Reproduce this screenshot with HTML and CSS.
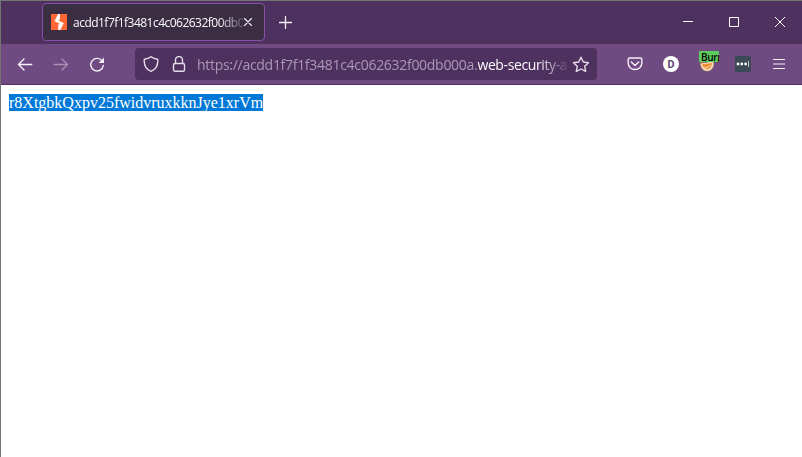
FILE: index.html
```html
<!DOCTYPE html>
<html lang="en">
<head>
<meta charset="utf-8">
<title>Browser window</title>
<link rel="stylesheet" href="styles.css">
</head>
<body>
<div class="window">
  <header class="tabbar">
    <div class="tab">
      <svg class="favicon" width="16" height="16" viewBox="0 0 16 16"><path fill="#ff6633" d="M0 0h16v16H0z"/><path fill="#fff" d="M7 0h2v5.200L7.500 6.700 12.800 9 9.300 16H7.200v-5l1.300-1.500L3.500 7.300z"/></svg>
      <span class="tab-title">acdd1f7f1f3481c4c062632f00db000a</span>
      <svg class="tab-close" width="10" height="10" viewBox="0 0 10 10"><path d="M1.500 1.500l7 7m0-7l-7 7"/></svg>
    </div>
    <svg class="newtab" width="13" height="13" viewBox="0 0 13 13"><path d="M6.500 .5v12M.5 6.500h12"/></svg>
    <div class="controls">
      <svg width="46" height="43" viewBox="0 0 46 43"><path d="M18 20.500h10"/></svg>
      <svg width="46" height="43" viewBox="0 0 46 43"><path d="M18.500 16.500h9v9h-9z"/></svg>
      <svg width="46" height="43" viewBox="0 0 46 43"><path d="M18 16l10 10m0-10L18 26"/></svg>
    </div>
  </header>
  <nav class="toolbar">
    <div class="history">
      <svg width="16" height="16" viewBox="0 0 16 16"><path d="M14.700 8.500H1.700M7 3L1.500 8.500 7 14"/></svg>
      <svg class="off" width="16" height="16" viewBox="0 0 16 16"><path d="M1.300 8.500h13M9 3l5.500 5.500L9 14"/></svg>
      <svg width="16" height="16" viewBox="0 0 16 16"><path d="M13.500 5.500A6.300 6.300 0 1 0 14.300 9.500"/><path class="solid" d="M15 1.500V7H9.500z"/></svg>
    </div>
    <div class="address">
      <svg width="16" height="16" viewBox="0 0 16 16"><path d="M8 .8C6 2.300 3.600 3 1.300 3.200C.8 8.500 3 13.500 8 15.300C13 13.500 15.200 8.500 14.700 3.200C12.400 3 10 2.300 8 .8z"/></svg>
      <svg class="lock" width="14" height="16" viewBox="0 0 14 16"><rect x="1.500" y="7.500" width="11" height="7.800" rx="1.500"/><path d="M3.500 7.500V4a3.500 3.500 0 0 1 7 0v3.500"/></svg>
      <span class="url"><span class="dim">https://acdd1f7f1f3481c4c062632f00db000a.</span><span class="host">web-security-academy.net</span></span>
      <svg class="star" width="18" height="17" viewBox="0 0 18 17"><path d="M9 1.200l2.300 4.800 5.200.7-3.800 3.600 1 5.200L9 13l-4.700 2.500 1-5.200L1.500 6.700l5.200-.7z"/></svg>
    </div>
    <div class="tools">
      <svg width="16" height="16" viewBox="0 0 16 16"><path d="M2.700 2h10.600a1.500 1.500 0 0 1 1.500 1.500v3.700a6.800 6.300 0 0 1-13.600 0V3.500A1.500 1.500 0 0 1 2.700 2zM4.300 6L8 9.500 11.700 6"/></svg>
      <span class="dbadge">D</span>
      <span class="proxy">
        <svg width="16" height="16" viewBox="0 0 16 16"><path class="fox" d="M1 4C0 10 2 15.500 8 15.500S16 10 15 4z"/><path class="tail" d="M1.500 8c2-2 6 0 8-2 3-2 6 0 5 3-1 4-3 6-7 6-3 0-5-3-6-7z"/><path class="orange" d="M3 7.500c3 2 7-1 10 0-1 5-4 6-6 5.500-2-.5-3-2.500-4-5.500z"/><path class="streak" d="M5 12c3 0 5-1 6.500-3"/></svg>
        <span class="proxy-label">Burp</span>
      </span>
      <svg class="pass" width="16" height="16" viewBox="0 0 16 16"><rect width="16" height="16" rx="1.500"/><circle cx="3" cy="8" r="1.400"/><circle cx="6.800" cy="8" r="1.400"/><circle cx="10.600" cy="8" r="1.400"/><path d="M13.500 5.500v5"/></svg>
      <svg class="menu" width="12" height="16" viewBox="0 0 12 16"><path d="M0 3.500h12M0 8h12M0 12.500h12"/></svg>
    </div>
  </nav>
  <main class="page"><span class="selected">r8XtgbkQxpv25fwidvruxkknJye1xrVm</span></main>
</div>
</body>
</html>
```

FILE: styles.css
```css
* { box-sizing: border-box; }
body { margin: 0; background: #fff; overflow: hidden; }
svg { display: block; flex: none; fill: none; stroke: #f5eff8; stroke-width: 1.4; stroke-linecap: round; stroke-linejoin: round; }
.window { width: 802px; height: 457px; border-top: 1px solid #747474; border-left: 1px solid #747474; display: flex; flex-direction: column; }
.tabbar { height: 43px; flex: none; background: #4f315f; display: flex; align-items: flex-start; padding-left: 41px; }
.tab { width: 223px; height: 38px; margin-top: 2px; border: 1px solid #864fa8; border-radius: 4px; background: #3b2e42; display: flex; align-items: center; padding: 0 11px 0 8px; }
.favicon { stroke: none; }
.tab-title { width: 170px; margin-left: 6px; padding-top: 2px; overflow: hidden; white-space: nowrap; color: #fbfafc; font: 12px/20px "Open Sans", sans-serif; letter-spacing: -0.52px; mask-image: linear-gradient(to right, #000 145px, transparent 175px); }
.tab-close { stroke-width: 1.1; }
.newtab { margin: 15px 0 0 14px; stroke-width: 1.3; }
.controls { display: flex; margin-left: auto; margin-right: -1px; }
.controls svg { stroke: #fff; stroke-width: 1; stroke-linecap: butt; stroke-linejoin: miter; }
.toolbar { height: 41px; flex: none; background: #704b82; border-bottom: 1px solid #51335f; display: flex; align-items: center; padding-left: 16px; }
.history { display: flex; gap: 20px; width: 118px; }
.off { opacity: .42; }
.solid { fill: #f5eff8; stroke: none; }
.address { width: 462px; height: 32px; border-radius: 4px; background: #4f315f; display: flex; align-items: center; padding: 0 7px 0 8px; }
.address svg { stroke: #e6dcea; }
.lock { margin-left: 13px; }
.url { width: 370px; margin-left: 11px; padding-top: 2px; overflow: hidden; white-space: nowrap; font: 14px/20px "Open Sans", sans-serif; letter-spacing: -0.29px; color: #fbfafc; mask-image: linear-gradient(to right, #000 340px, transparent 373px); }
.dim { color: #ab98b5; }
.host { letter-spacing: -0.38px; }
.star { margin-left: auto; }
.tools { display: flex; align-items: center; gap: 20px; margin-left: 30px; }
.dbadge { width: 16px; height: 16px; border-radius: 50%; background: #fff; color: #604070; text-align: center; font: bold 10px/16px "Open Sans", sans-serif; }
.proxy { width: 16px; height: 16px; position: relative; }
.proxy .fox { fill: #9c755f; stroke: none; }
.proxy .tail { fill: #f5d8bd; stroke: none; }
.proxy .orange { fill: #ed8c2a; stroke: none; }
.proxy .streak { stroke: #f8e4cc; stroke-width: 1; }
.proxy-label { position: absolute; left: 0; top: -5px; width: 20px; height: 11px; overflow: hidden; border-radius: 1px; background: #5dcd5c; color: #000; padding-left: 2px; font: 600 10px/12px "Open Sans", sans-serif; letter-spacing: -0.3px; }
.pass { stroke: none; }
.pass rect { fill: #3c4a57; }
.pass circle { fill: #fff; }
.pass path { stroke: #c4c9ce; stroke-width: 1; }
.menu { margin-left: 2px; stroke-width: 1.2; stroke-linecap: butt; }
.page { padding: 9px 0 0 8px; font: 16px/17px "Liberation Serif", serif; }
.selected { display: inline-block; height: 17px; background: #0078d7; color: #fff; }
```
